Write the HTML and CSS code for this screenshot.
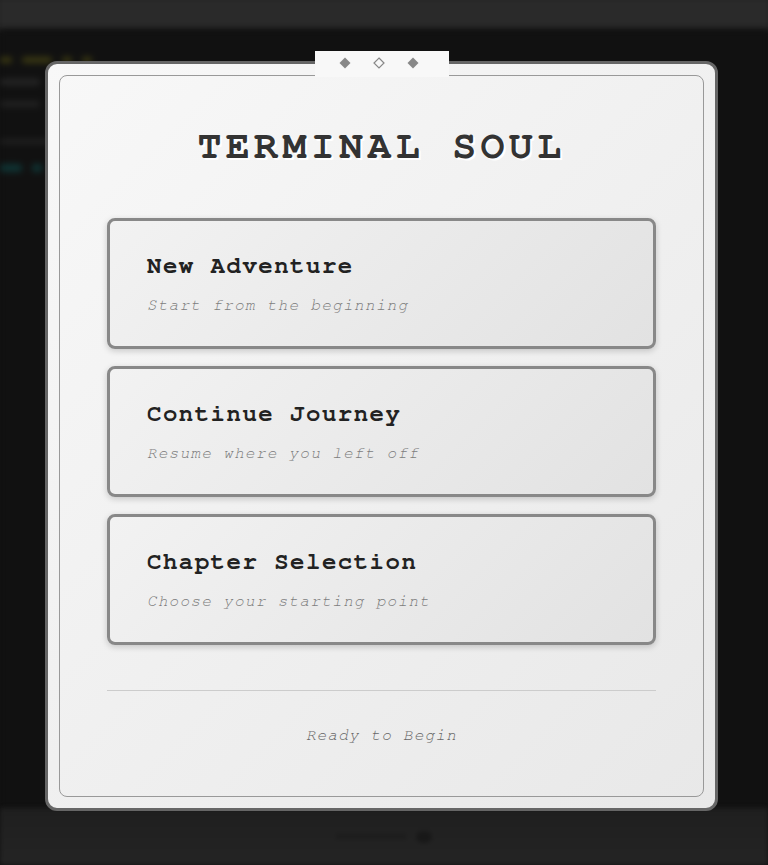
FILE: index.html
```html
<!DOCTYPE html>
<html lang="en">
<head>
<meta charset="utf-8">
<title>Terminal Soul</title>
<link rel="stylesheet" href="styles.css">
</head>
<body>
<div class="app">
  <header class="topbar"></header>
  <main class="terminal">
    <div class="line line-yellow"><span class="seg w1"></span><span class="seg w2"></span><span class="seg w3"></span><span class="seg w3"></span></div>
    <div class="line line-gray"><span class="seg w4"></span></div>
    <div class="line line-gray2"><span class="seg w4"></span></div>
    <div class="line line-rule"><span class="seg w5"></span></div>
    <div class="line line-teal"><span class="seg w6"></span><span class="seg w7"></span></div>
  </main>
  <footer class="bottombar"><span class="prompt-dim"></span><span class="prompt-dot"></span></footer>
</div>

<div class="overlay">
  <div class="modal">
    <div class="tab">
      <svg class="gem" viewBox="0 0 12 12"><polygon points="6,0.5 11.5,6 6,11.5 0.5,6" fill="#888"/></svg>
      <svg class="gem" viewBox="0 0 12 12"><polygon points="6,1 11,6 6,11 1,6" fill="none" stroke="#888" stroke-width="1.2"/></svg>
      <svg class="gem" viewBox="0 0 12 12"><polygon points="6,0.5 11.5,6 6,11.5 0.5,6" fill="#888"/></svg>
    </div>
    <div class="inner">
      <h1 class="title">TERMINAL SOUL</h1>
      <div class="menu">
        <div class="card">
          <div class="card-title">New Adventure</div>
          <div class="card-sub">Start from the beginning</div>
        </div>
        <div class="card">
          <div class="card-title">Continue Journey</div>
          <div class="card-sub">Resume where you left off</div>
        </div>
        <div class="card">
          <div class="card-title">Chapter Selection</div>
          <div class="card-sub">Choose your starting point</div>
        </div>
      </div>
      <div class="divider"></div>
      <div class="status">Ready to Begin</div>
    </div>
  </div>
</div>
</body>
</html>
```
FILE: styles.css
```css
html, body {
  margin: 0;
  padding: 0;
  background: #111;
}

.app {
  height: 865px;
  display: flex;
  flex-direction: column;
  overflow: hidden;
}

.topbar {
  height: 34px;
  background: #2a2a2a;
  filter: blur(3px);
  margin: -4px -4px 0;
}

.terminal {
  flex: 1;
  background: #111;
  padding: 27px 0 0 0;
  filter: blur(3px);
}

.line {
  display: flex;
  gap: 10px;
  height: 10px;
  margin-bottom: 12px;
}

.seg { display: block; height: 6px; border-radius: 3px; }
.line-yellow .seg { background: #3c3a12; }
.line-gray .seg { background: #262626; }
.line-gray2 { margin-top: 6px; }
.line-gray2 .seg { background: #222; }
.line-rule { margin-top: 29px; }
.line-rule .seg { background: #2a2a2a; height: 3px; }
.line-teal { margin-top: 14px; }
.line-teal .seg { background: #0f3333; height: 8px; }

.w1 { width: 12px; }
.w2 { width: 30px; }
.w3 { width: 10px; }
.w4 { width: 40px; }
.w5 { width: 50px; }
.w6 { width: 22px; }
.w7 { width: 10px; }

.bottombar {
  height: 57px;
  background: linear-gradient(#1f1f1f, #242424);
  display: flex;
  justify-content: center;
  align-items: center;
  gap: 10px;
  filter: blur(2px);
}

.prompt-dim {
  width: 70px;
  height: 5px;
  background: #1c1c1c;
}
.prompt-dot {
  width: 16px;
  height: 12px;
  border-radius: 50%;
  background: #181818;
}

.overlay {
  position: absolute;
  left: 45px;
  top: 61px;
}

.modal {
  position: relative;
  box-sizing: border-box;
  width: 673px;
  height: 750px;
  border: 3px solid #666;
  border-radius: 12px;
  background: linear-gradient(135deg, #f8f8f8 0%, #e8e8e8 100%);
  padding: 11px;
  font-family: "Nimbus Mono PS", "Nimbus Mono L", "FreeMono", "Courier Prime", "Courier 10 Pitch", "Courier New", Courier, monospace;
}

.tab {
  position: absolute;
  top: -13px;
  left: 267px;
  width: 134px;
  height: 26px;
  background: #f8f8f8;
  display: flex;
  justify-content: center;
  align-items: center;
  gap: 22px;
  padding: 0 6px 2px 0;
  box-sizing: border-box;
}

.gem { width: 12px; height: 12px; display: block; }

.inner {
  box-sizing: border-box;
  height: 100%;
  border: 1px solid #999;
  border-radius: 8px;
  padding: 0 47px;
}

.title {
  margin: 47px 0 0;
  font-size: 40px;
  line-height: 46px;
  font-weight: bold;
  text-align: center;
  color: #333;
  text-shadow: 2px 2px 0 #fff;
  letter-spacing: 4.3px;
}

.menu {
  margin-top: 49px;
  display: flex;
  flex-direction: column;
  gap: 17px;
}

.card {
  border: 3px solid #888;
  border-radius: 8px;
  background: linear-gradient(135deg, #f2f2f2 0%, #e2e2e2 100%);
  box-shadow: 0 2px 6px rgba(0, 0, 0, 0.18);
  padding: 31px 37px 30px;
}

.card-title {
  font-size: 24px;
  line-height: 28px;
  font-weight: bold;
  color: #222;
  letter-spacing: 1.5px;
}

.card-sub {
  margin-top: 14px;
  font-size: 16px;
  line-height: 22px;
  font-style: italic;
  color: #7c7c7c;
  letter-spacing: 1.3px;
}

.divider {
  margin-top: 45px;
  height: 1px;
  background: #ccc;
}

.status {
  margin-top: 33px;
  text-align: center;
  font-size: 16px;
  line-height: 22px;
  font-style: italic;
  color: #666;
  letter-spacing: 1.2px;
}
```
